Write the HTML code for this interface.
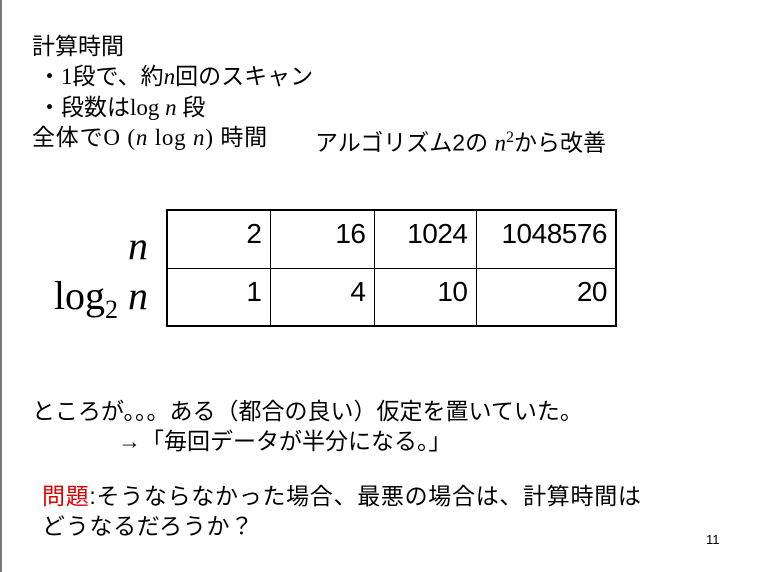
<!DOCTYPE html>
<html><head><meta charset="utf-8"><style>
body{margin:0;width:768px;height:572px;background:#fff;position:relative;overflow:hidden;font-family:"Liberation Sans","Noto Sans CJK JP",sans-serif;color:#000}
.l{position:absolute;white-space:nowrap;font-size:23px;line-height:26px}
.s{font-family:"Liberation Serif","Noto Sans CJK JP",serif}
i{font-family:"Liberation Serif",serif}
table{position:absolute;left:166px;top:209px;border-collapse:collapse;border:2px solid #000}
td{border:1px solid #000;height:58px;text-align:right;vertical-align:top;font-size:28px;padding:8px 8px 0 0;box-sizing:border-box;line-height:30px;letter-spacing:-0.5px}
.r{position:absolute;right:620px;white-space:nowrap;font-family:'Liberation Serif',serif;font-size:40px;line-height:44px}
</style></head><body>
<div style="position:absolute;left:0;top:0;width:2px;height:572px;background:#777"></div>
<div class="l" style="left:32px;top:33px">計算時間</div>
<div class="l s" style="left:38px;top:64px">・1段で、約<i>n</i>回のスキャン</div>
<div class="l s" style="left:38px;top:95px">・段数はlog <i>n</i> 段</div>
<div class="l s" style="left:32px;top:125px;letter-spacing:0.8px">全体でO (<i>n</i> log <i>n</i>) 時間</div>
<div class="l" style="left:315px;top:125px">アルゴリズム2の <i>n</i><sup style="font-size:16px;font-family:'Liberation Serif',serif">2</sup>から改善</div>
<div class="r" style="top:224px"><i>n</i></div>
<div class="r" style="top:274px">log<sub style="font-size:26px">2</sub> <i>n</i></div>
<table>
<tr><td style="width:103px">2</td><td style="width:104px">16</td><td style="width:102px">1024</td><td style="width:140px">1048576</td></tr>
<tr><td>1</td><td>4</td><td>10</td><td>20</td></tr>
</table>
<div class="l" style="left:32px;top:398px">ところが。。。ある（都合の良い）仮定を置いていた。</div>
<div class="l" style="left:118px;top:428px">→「毎回データが半分になる。」</div>
<div class="l" style="left:42px;top:483px;letter-spacing:0.7px"><span style="color:#e00000">問題</span>:そうならなかった場合、最悪の場合は、計算時間は</div>
<div class="l" style="left:42px;top:513px;letter-spacing:0.7px">どうなるだろうか？</div>
<div class="l" style="left:706px;top:532px;font-size:13px;line-height:16px">11</div>
</body></html>
